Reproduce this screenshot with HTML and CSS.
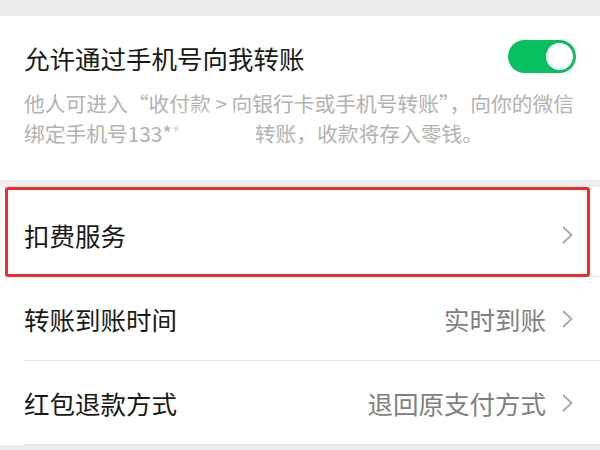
FILE: index.html
```html
<!DOCTYPE html>
<html lang="zh-CN">
<head>
<meta charset="utf-8">
<title>转账设置</title>
<link rel="stylesheet" href="styles.css">
</head>
<body>
<div class="page">
  <section class="card card-top">
    <div class="switch-row">
      <span class="title">允许通过手机号向我转账</span>
      <span class="toggle"><span class="knob"></span></span>
    </div>
    <p class="desc">他人可进入“收付款 &gt; 向银行卡或手机号转账”，向你的微信<br>绑定手机号133**<span class="mask"></span>转账，收款将存入零钱。</p>
  </section>
  <section class="card card-list">
    <div class="row">
      <span class="label">扣费服务</span>
      <svg class="chev" viewBox="0 0 11 18" width="11" height="18"><path d="M1.5 1.5 L9.5 9 L1.5 16.5"/></svg>
    </div>
    <div class="row">
      <span class="label">转账到账时间</span>
      <span class="value">实时到账</span>
      <svg class="chev" viewBox="0 0 11 18" width="11" height="18"><path d="M1.5 1.5 L9.5 9 L1.5 16.5"/></svg>
    </div>
    <div class="row">
      <span class="label">红包退款方式</span>
      <span class="value">退回原支付方式</span>
      <svg class="chev" viewBox="0 0 11 18" width="11" height="18"><path d="M1.5 1.5 L9.5 9 L1.5 16.5"/></svg>
    </div>
    <div class="highlight"></div>
  </section>
</div>
</body>
</html>
```
FILE: styles.css
```css
html, body {
  margin: 0;
  padding: 0;
  background: #ededed;
}
body {
  font-family: "Noto Sans CJK SC", "Noto Sans", sans-serif;
  width: 600px;
  height: 450px;
  overflow: hidden;
}
.page {
  padding-top: 16px;
}
.card {
  background: #fff;
}
.card-top {
  padding: 25px 24px 32px 24px;
}
.switch-row {
  display: flex;
  align-items: center;
  justify-content: space-between;
  height: 34px;
}
.title {
  font-size: 25.5px;
  line-height: 34px;
  color: #191919;
}
.toggle {
  display: flex;
  justify-content: flex-end;
  box-sizing: border-box;
  width: 68px;
  height: 33px;
  padding: 3px;
  border-radius: 17px;
  background: #07c160;
  margin-bottom: 3px;
}
.knob {
  width: 27px;
  height: 27px;
  border-radius: 50%;
  background: #fff;
}
.desc {
  margin: 13px 0 0 0;
  font-size: 20.75px;
  line-height: 30px;
  color: #b2b2b2;
  white-space: nowrap;
}
.mask {
  display: inline-block;
  width: 76px;
  height: 37px;
  margin: -6px 3px -6px -6px;
  vertical-align: -2px;
  background: #fff;
  border-radius: 14px;
  filter: blur(3px);
}
.card-list {
  position: relative;
  margin-top: 7px;
  padding-top: 6px;
}
.row {
  display: flex;
  align-items: center;
  height: 83px;
  margin-left: 24px;
  padding-right: 27px;
  border-bottom: 1px solid #e6e6e6;
}
.row:last-of-type {
  border-bottom: none;
}
.label {
  flex: 1;
  font-size: 25.5px;
  color: #191919;
}
.value {
  font-size: 25.5px;
  color: #808080;
}
.chev {
  margin-left: 16px;
  fill: none;
  stroke: #a8a8a8;
  stroke-width: 1.8;
  stroke-linecap: round;
  stroke-linejoin: round;
}
.highlight {
  position: absolute;
  top: 0;
  left: 5px;
  width: 585px;
  height: 90px;
  box-sizing: border-box;
  border: 3px solid #f42a2a;
  border-radius: 3px;
}
```
